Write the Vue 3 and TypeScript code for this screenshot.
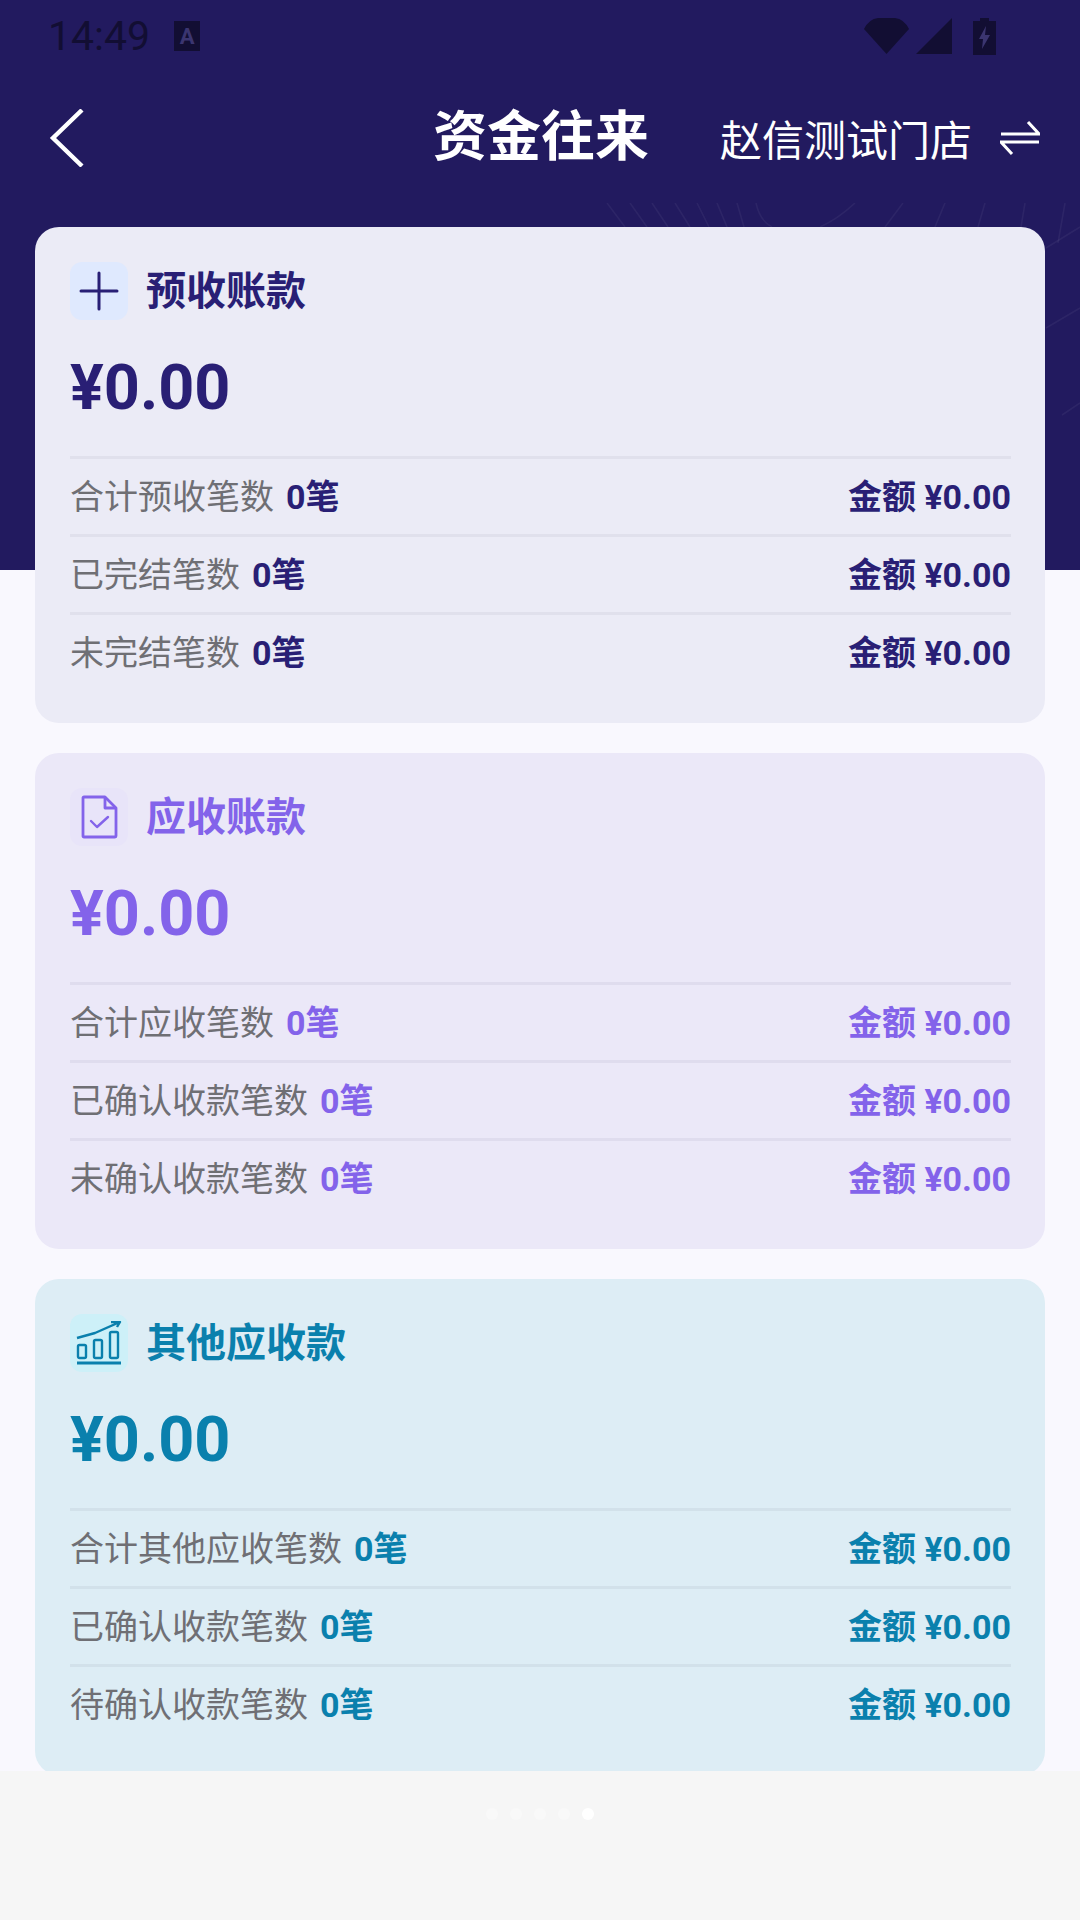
<script setup lang="ts">
interface Row { label: string }
interface Card { title: string; icon: string; theme: string; rows: Row[] }
const cards: Card[] = [
  { title: '预收账款', icon: 'plus', theme: 'navy', rows: [{ label: '合计预收笔数' }, { label: '已完结笔数' }, { label: '未完结笔数' }] },
  { title: '应收账款', icon: 'doc', theme: 'violet', rows: [{ label: '合计应收笔数' }, { label: '已确认收款笔数' }, { label: '未确认收款笔数' }] },
  { title: '其他应收款', icon: 'chart', theme: 'teal', rows: [{ label: '合计其他应收笔数' }, { label: '已确认收款笔数' }, { label: '待确认收款笔数' }] },
]
const fanLines = [
  'M607 0 L625 24', 'M630 0 L647 24', 'M652 0 L668 24', 'M675 0 L690 24',
  'M697 0 L709 24', 'M717 0 L727 24', 'M737 0 L744 24', 'M756 0 Q760 18 772 24',
  'M855 0 Q838 16 820 24', 'M903 0 L885 24', 'M945 0 L935 24', 'M985 0 L978 24',
  'M1025 0 L1021 24', 'M1065 0 L1058 40',
  'M1046 45 L1080 24', 'M1046 125 L1080 105', 'M1062 212 L1080 200',
]
</script>

<template>
  <div class="page">
    <div class="hero">
      <svg class="hero-lines" width="1080" height="367" viewBox="0 0 1080 367" fill="none">
        <path v-for="d in fanLines" :key="d" :d="d" stroke="#fff" stroke-opacity="0.05" stroke-width="1.6" />
      </svg>
    </div>
    <div class="content">
      <div class="status">
        <div class="status-left">
          <span class="clock">14:49</span>
          <span class="a-badge">A</span>
        </div>
        <div class="status-right">
          <svg width="45" height="36" viewBox="0 0 45 36"><path d="M22.5 36 L0 11 Q5 1 14 0 H31 Q40 1 45 11 Z" fill="#120e33" /></svg>
          <svg width="36" height="36" viewBox="0 0 36 36"><path d="M36 0 V36 H0 Z" fill="#120e33" /></svg>
          <svg class="battery" width="23" height="37" viewBox="0 0 23 37"><path d="M7 0 H16 V3 H23 V37 H0 V3 H7 Z" fill="#120e33" /><path d="M13 8 L6 21 H10 L9 31 L17 17 H12 Z" fill="#3b3570" /></svg>
        </div>
      </div>
      <header class="nav">
        <svg class="back" width="36" height="58" viewBox="0 0 36 58" fill="none"><path d="M33 1 L4 29 L33 57" stroke="#fff" stroke-width="4.4" /></svg>
        <h1 class="nav-title">资金往来</h1>
        <div class="store">
          <span>赵信测试门店</span>
          <svg width="40" height="36" viewBox="0 0 40 36" fill="none" stroke="#fff" stroke-width="3"><path d="M1 14 H39 L28 2" /><path d="M39 22 H1 L12 34" /></svg>
        </div>
      </header>
      <main class="cards">
        <section v-for="card in cards" :key="card.title" class="card" :class="card.theme">
          <div class="card-head">
            <span class="icon-box">
              <svg v-if="card.icon === 'plus'" width="40" height="40" viewBox="0 0 40 40" fill="none" stroke="currentColor" stroke-width="3" stroke-linecap="round"><path d="M2 20 H38 M20 2 V38" /></svg>
              <svg v-else-if="card.icon === 'doc'" width="37" height="44" viewBox="0 0 37 44" fill="none" stroke="currentColor" stroke-width="2.8" stroke-linejoin="round"><path d="M3 2 H24 L35 13 V41 Q35 42 34 42 H3 Q2 42 2 41 V3 Q2 2 3 2 Z" /><path d="M24 3 V13 H35" /><path d="M10 26 L16 32 L27 22" stroke-linecap="round" stroke-width="2.4" /></svg>
              <svg v-else width="46" height="44" viewBox="0 0 46 44" fill="none" stroke="currentColor" stroke-width="2.4" stroke-linejoin="round"><path d="M1 17 L19 12 L44 1 M35 1 H44 L41 6" /><rect x="2" y="24" width="8" height="13" rx="1.5" /><rect x="18" y="19" width="8" height="18" rx="1.5" /><rect x="34" y="11" width="8" height="26" rx="1.5" /><path d="M1 42 H45" stroke-width="3" /></svg>
            </span>
            <h2 class="card-title">{{ card.title }}</h2>
          </div>
          <div class="total">¥0.00</div>
          <ul class="rows">
            <li v-for="row in card.rows" :key="row.label" class="row">
              <span class="row-left"><span class="label">{{ row.label }}</span><b class="count">0笔</b></span>
              <b class="money">金额 ¥0.00</b>
            </li>
          </ul>
        </section>
      </main>
      <footer class="footer">
        <span class="dot"></span><span class="dot"></span><span class="dot"></span><span class="dot"></span><span class="dot active"></span>
      </footer>
    </div>
  </div>
</template>

<style scoped>
.page {
  position: relative;
  width: 1080px;
  height: 1920px;
  overflow: hidden;
  background: #f9f8fe;
  font-family: Roboto, "Noto Sans CJK SC", sans-serif;
}
.hero {
  position: absolute;
  top: 0;
  left: 0;
  width: 1080px;
  height: 570px;
  background: #221a5f;
}
.hero-lines {
  position: absolute;
  top: 203px;
  left: 0;
}
.content {
  position: relative;
  display: flex;
  flex-direction: column;
  height: 1920px;
}
.status {
  display: flex;
  justify-content: space-between;
  align-items: center;
  height: 72px;
  padding: 0 84px 0 48px;
  box-sizing: border-box;
}
.status-left, .status-right {
  display: flex;
  align-items: center;
}
.status-left { gap: 24px; }
.status-right { gap: 7px; }
.battery { margin-left: 14px; }
.clock {
  font-size: 41px;
  line-height: 48px;
  color: #120e33;
}
.a-badge {
  display: flex;
  align-items: center;
  justify-content: center;
  width: 26px;
  height: 30px;
  background: #120e33;
  color: #3b3570;
  font-size: 22px;
  font-weight: 700;
}
.nav {
  display: flex;
  align-items: center;
  height: 131px;
  padding: 0 40px 0 49px;
  position: relative;
}
.back { flex: none; }
.nav-title {
  position: absolute;
  left: 433px;
  margin: 0;
  font-size: 54px;
  font-weight: 700;
  color: #fff;
  line-height: 60px;
}
.store {
  margin-left: auto;
  display: flex;
  align-items: center;
  gap: 28px;
  font-size: 42px;
  color: #fff;
}
.cards {
  display: flex;
  flex-direction: column;
  gap: 30px;
  padding: 0 35px;
  margin-top: 24px;
  flex: none;
  height: 1544px;
  box-sizing: border-box;
  overflow: hidden;
}
.card {
  flex: none;
  height: 496px;
  box-sizing: border-box;
  padding: 35px 34px 0 35px;
  border-radius: 24px;
}
.navy { background: #ebebf6; color: #291f75; }
.violet { background: #ebe8f8; color: #8363ea; }
.teal { background: #ddedf5; color: #0a80ad; }
.card-head {
  display: flex;
  align-items: center;
  gap: 18px;
  height: 58px;
}
.icon-box {
  display: flex;
  align-items: center;
  justify-content: center;
  width: 58px;
  height: 58px;
  border-radius: 12px;
}
.navy .icon-box { background: #dfe9fe; }
.violet .icon-box { background: #e8e4f9; }
.teal .icon-box { background: #cdf0f8; }
.card-title {
  margin: 0;
  font-size: 40px;
  font-weight: 700;
  line-height: 58px;
  position: relative;
  top: 1px;
}
.total {
  margin-top: 32px;
  height: 72px;
  font-size: 63px;
  font-weight: 700;
  line-height: 72px;
}
.rows {
  list-style: none;
  margin: 32px 0 0;
  padding: 0;
}
.row {
  display: flex;
  justify-content: space-between;
  align-items: center;
  height: 78px;
  box-sizing: border-box;
  padding-bottom: 4px;
  border-top: 3px solid #e0e0ec;
  font-size: 34px;
}
.violet .row { border-top-color: #dfdcee; }
.teal .row { border-top-color: #d2e1ea; }
.row-left {
  display: flex;
  align-items: center;
  gap: 12px;
}
.label { color: #6f6f74; }
.count, .money { font-weight: 700; }
.footer {
  flex: 1;
  background: #f6f6f6;
  display: flex;
  justify-content: center;
  gap: 12px;
  padding-top: 37px;
}
.dot {
  width: 12px;
  height: 12px;
  border-radius: 50%;
  background: #f9f9f9;
}
.dot.active { background: #fff; }
</style>
